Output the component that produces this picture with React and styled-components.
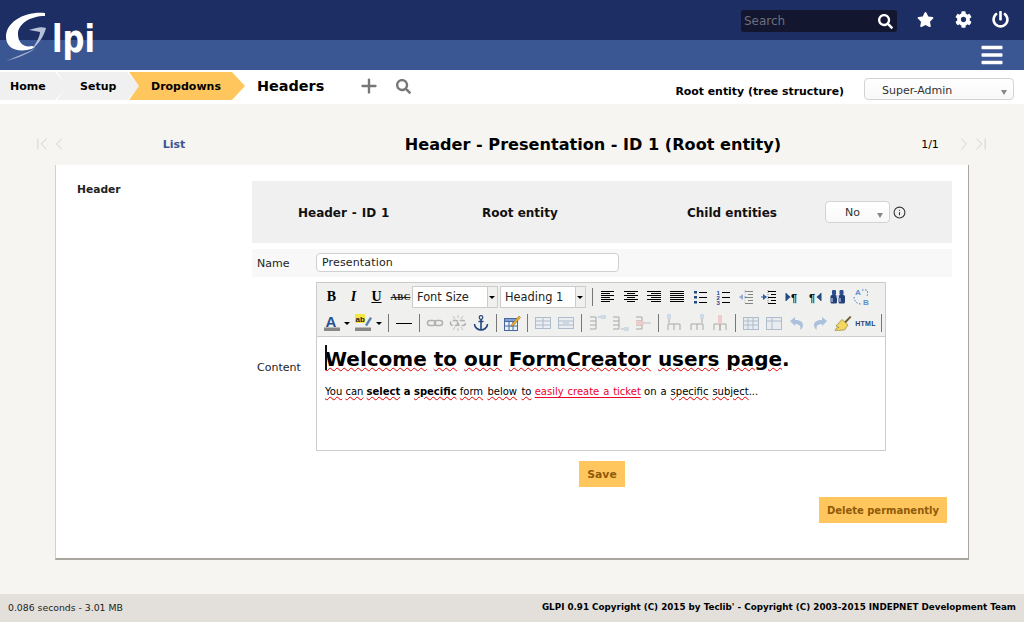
import React from 'react';
import styled, { createGlobalStyle } from 'styled-components';
import { FaStar, FaCog, FaPowerOff, FaSearch, FaBars } from 'react-icons/fa';
import { ChevronFirst, ChevronLast, ChevronLeft, ChevronRight, Info, Plus } from 'lucide-react';

const Global = createGlobalStyle`
  html, body { margin: 0; padding: 0; }
  body { font-family: "DejaVu Sans", Verdana, sans-serif; font-size: 11px; color: #000; background: #f6f5f1; }
`;

const Page = styled.div`
  position: relative;
  min-height: 622px;
  display: flex;
  flex-direction: column;
`;

const TopBar = styled.div`
  height: 40px;
  background: #1c2e63;
  display: flex;
  align-items: center;
  justify-content: flex-end;
  padding-right: 6px;
`;

const SearchBox = styled.div`
  width: 156px;
  height: 22px;
  box-sizing: border-box;
  padding: 0 4px 0 3px;
  margin: 2px 9px 0 0;
  background: #12162e;
  border-radius: 3px;
  display: flex;
  align-items: center;
  justify-content: space-between;
  color: #6d6f7e;
  font-size: 12px;
  svg { color: #fff; font-size: 15px; }
`;

const TopIcon = styled.span`
  width: 38px;
  margin-bottom: 2px;
  display: flex;
  justify-content: center;
  color: #fff;
  font-size: 17px;
  &:last-child { width: 36px; }
`;

const SubBar = styled.div`
  height: 30px;
  background: #3a5693;
  display: flex;
  align-items: center;
  justify-content: flex-end;
  padding-right: 20px;
  color: #fff;
  font-size: 24px;
`;

const Logo = styled.svg`
  position: absolute;
  left: 0;
  top: 0;
`;

const NavBar = styled.div`
  height: 34px;
  background: #fff;
  display: flex;
  align-items: center;
`;

const Crumb = styled.div`
  height: 28px;
  width: ${p => p.$w}px;
  margin-left: ${p => (p.$first ? 0 : -11)}px;
  margin-top: -2px;
  box-sizing: border-box;
  padding-left: ${p => p.$pad}px;
  display: flex;
  align-items: center;
  font-weight: bold;
  background: ${p => (p.$active ? '#ffc65d' : '#f0f0f0')};
  clip-path: ${p => (p.$first
    ? 'polygon(0 0, calc(100% - 13px) 0, 100% 50%, calc(100% - 13px) 100%, 0 100%)'
    : 'polygon(0 0, calc(100% - 13px) 0, 100% 50%, calc(100% - 13px) 100%, 0 100%, 10px 50%)')};
`;

const NavTitle = styled.div`
  margin-left: 12px;
  width: 94px;
  font-size: 14.4px;
  font-weight: bold;
  margin-top: -2px;
`;

const NavAction = styled.span`
  width: 35px;
  margin-top: -2px;
  display: flex;
  justify-content: center;
  color: #777;
  font-size: 15px;
`;

const EntityName = styled.div`
  margin-left: auto;
  margin-right: 20px;
  margin-top: 8px;
  font-weight: bold;
  font-size: 10.9px;
`;

const Select = styled.div`
  position: relative;
  width: ${p => p.$w}px;
  height: 22px;
  box-sizing: border-box;
  border: 1px solid #d3d3d3;
  border-radius: 4px;
  background: linear-gradient(#fff, #f8f8f8);
  display: flex;
  align-items: center;
  padding-left: ${p => p.$pad}px;
  color: #333;
  font-weight: normal;
  &::after {
    content: '';
    position: absolute;
    right: 6px;
    bottom: 4px;
    border: 3.5px solid transparent;
    border-top: 5px solid #888;
    border-bottom: 0;
  }
`;

const EntitySelect = styled(Select)`
  margin-right: 10px;
  margin-top: 4px;
  padding-top: 2px;
`;

const Main = styled.main`
  flex: 1;
  padding: 21px 55px 34px;
`;

const TitleRow = styled.div`
  height: 40px;
  display: flex;
  align-items: center;
  margin-left: -23px;
  margin-right: -22px;
  padding-bottom: 2px;
  box-sizing: border-box;
`;

const Pager = styled.div`
  display: flex;
  color: #d2d2d2;
  svg + svg { margin-left: -3px; }
`;

const ListLink = styled.div`
  width: 124px;
  text-align: center;
  font-weight: bold;
  color: #3a5693;
  margin-left: 43px;
`;

const Title = styled.h1`
  flex: 1;
  margin: 0;
  font-size: 16.1px;
  font-weight: bold;
  text-align: center;
  padding-left: 35px;
`;

const Count = styled.div`
  width: 30px;
  text-align: center;
  margin-right: 9px;
`;

const Card = styled.section`
  height: 395px;
  box-sizing: border-box;
  background: #fff;
  border-left: 1px solid #d2d0cb;
  border-right: 1px solid #a9a6a0;
  border-bottom: 2px solid #a9a6a0;
  display: flex;
  padding: 16px 16px 0 21px;
`;

const SideLabel = styled.div`
  width: 175px;
  font-weight: bold;
  font-size: 10.7px;
  color: #222;
  padding-top: 2px;
`;

const Form = styled.div`
  flex: 1;
  display: flex;
  flex-direction: column;
  min-width: 0;
`;

const HeadRow = styled.div`
  height: 62px;
  background: #f0f0f0;
  display: flex;
  align-items: center;
  font-weight: bold;
  font-size: 12px;
  color: #111;
  margin-bottom: 6px;
`;

const HeadCell = styled.div`
  width: ${p => p.$w}px;
  padding-left: ${p => p.$pad}px;
  padding-top: 2px;
  box-sizing: border-box;
  display: flex;
  align-items: center;
  word-spacing: ${p => p.$spread || 0}px;
`;

const NoSelect = styled(Select)`
  font-size: 11px;
`;

const InfoMark = styled.span`
  display: flex;
  margin-left: 3px;
  color: #333;
`;

const NameRow = styled.div`
  height: 28px;
  background: #f8f8f8;
  display: flex;
  align-items: center;
  margin-bottom: 5px;
`;

const FieldLabel = styled.div`
  width: 64px;
  padding-left: 5px;
  padding-top: ${p => (p.$low ? 2 : 0)}px;
  box-sizing: border-box;
  color: #222;
`;

const NameInput = styled.div`
  width: 303px;
  height: 19px;
  box-sizing: border-box;
  border: 1px solid #d0d0d0;
  border-radius: 4px;
  background: #fff;
  padding-left: 5px;
  line-height: 17px;
  letter-spacing: 0.15px;
  color: #222;
  margin-bottom: 2px;
`;

const ContentRow = styled.div`
  display: flex;
  align-items: center;
`;

const Editor = styled.div`
  width: 570px;
  height: 169px;
  box-sizing: border-box;
  border: 1px solid #ccc;
  display: flex;
  flex-direction: column;
`;

const Toolbar = styled.div`
  height: 54px;
  flex: none;
  background: #f0f0ee;
  border-bottom: 1px solid #ccc;
  padding: 2px 0 0 3px;
  box-sizing: border-box;
`;

const ToolRow = styled.div`
  height: 24px;
  margin-bottom: 2px;
  display: flex;
  align-items: center;
`;

const Tool = styled.span`
  width: ${p => p.$w || 23}px;
  height: 22px;
  flex: none;
  display: flex;
  align-items: center;
  justify-content: center;
  gap: 3px;
`;

const Glyph = styled.span`
  font-family: "Liberation Serif", serif;
  font-weight: bold;
  font-size: 14px;
  margin-right: ${p => p.$shift || 0}px;
  font-style: ${p => (p.$i ? 'italic' : 'normal')};
  text-decoration: ${p => p.$deco || 'none'};
`;

const TinyGlyph = styled.span`
  font-family: ${p => (p.$serif ? '"Liberation Serif", serif' : '"Liberation Sans", sans-serif')};
  font-weight: bold;
  font-size: ${p => p.$size || 7}px;
  letter-spacing: 0.3px;
  color: ${p => p.$color || '#222'};
  text-decoration: ${p => p.$deco || 'none'};
`;

const Caret = styled.i`
  width: 0;
  height: 0;
  border: 3px solid transparent;
  border-top: 3px solid #000;
  border-bottom: 0;
`;

const Sep = styled.span`
  width: 8px;
  height: 18px;
  flex: none;
  display: flex;
  justify-content: center;
  &::before { content: ''; width: 1px; background: #777; }
`;

const ListBox = styled.div`
  width: 86px;
  height: 22px;
  flex: none;
  margin-right: ${p => p.$mr || 0}px;
  box-sizing: border-box;
  border: 1px solid #ccc;
  background: #fff;
  display: flex;
  align-items: center;
  padding-left: 4px;
  color: #222;
  font-size: 11.4px;
  position: relative;
  &::after {
    content: '';
    position: absolute;
    top: 0;
    bottom: 0;
    right: 0;
    width: 9px;
    background: #f0f0ee;
    border-left: 1px solid #ccc;
  }
  &::before {
    content: '';
    position: absolute;
    z-index: 1;
    right: 2px;
    top: 9px;
    border: 3px solid transparent;
    border-top: 3px solid #000;
    border-bottom: 0;
  }
`;

const EditArea = styled.div`
  position: relative;
  flex: 1;
  background: #fff;
  padding: 0 8px;
  color: #000;
`;

const Cursor = styled.span`
  position: absolute;
  left: 8px;
  top: 8px;
  width: 2px;
  height: 25px;
  background: #111;
`;

const Heading = styled.h2`
  margin: 10px 0 0;
  font-size: 20px;
  line-height: 25px;
  font-weight: bold;
`;

const Para = styled.p`
  margin: 13px 0 0;
  font-size: 10px;
  line-height: 14px;
`;

const Typo = styled.span`
  text-decoration: underline wavy #e00000 1px;
  text-underline-offset: 1px;
`;

const WideWords = styled.span`
  word-spacing: ${p => p.$gap}px;
`;

const RedLink = styled.span`
  color: #f0002a;
  text-decoration: underline;
  text-underline-offset: 2px;
  word-spacing: 0.7px;
`;

const SaveRow = styled.div`
  display: flex;
  justify-content: center;
  margin: 10px 0 10px;
`;

const DeleteRow = styled.div`
  display: flex;
  justify-content: flex-end;
  padding-right: 5px;
`;

const Button = styled.div`
  height: 26px;
  padding: 0 8px;
  background: #ffc65d;
  color: #8f5a0a;
  font-weight: bold;
  font-size: ${p => p.$size}px;
  display: flex;
  align-items: center;
`;

const Footer = styled.footer`
  height: 28px;
  background: #e3e0db;
  display: flex;
  align-items: center;
  justify-content: space-between;
  padding: 0 8px 2px;
  box-sizing: border-box;
  font-size: 9.3px;
  color: #222;
`;

const Copyright = styled.b`
  color: #000;
  font-size: 8.77px;
`;

const Icon = styled.svg`
  display: block;
  opacity: ${p => (p.$off ? 0.45 : 1)};
`;

const IconLabel = styled.text`
  font-family: "Liberation Sans", sans-serif;
  font-weight: bold;
`;

const I = ({ off, children, w = 18, h = 18 }) => (
  <Icon $off={off} width={w} height={h} viewBox="0 0 18 18">{children}</Icon>
);

const Lines = ({ rows, stroke = '#000' }) => (
  <>
    {rows.map(([x1, x2], k) => (
      <line key={k} x1={x1} x2={x2} y1={3.5 + k * 2} y2={3.5 + k * 2} stroke={stroke} />
    ))}
  </>
);

const alignLeft = [[2, 15], [2, 11], [2, 15], [2, 11], [2, 15], [2, 11]];
const alignCenter = [[2, 16], [5, 13], [2, 16], [5, 13], [2, 16], [5, 13]];
const alignRight = [[2, 16], [6, 16], [2, 16], [6, 16], [2, 16], [6, 16]];
const alignFull = [[2, 16], [2, 16], [2, 16], [2, 16], [2, 16], [2, 16]];

const BulletIcon = () => (
  <I>
    <rect x="3" y="3" width="3" height="2.5" fill="#224a80" />
    <rect x="3" y="8" width="3" height="2.5" fill="#224a80" />
    <rect x="3" y="13" width="3" height="2.5" fill="#224a80" />
    <path d="M8 4.500h8M8 9.500h8M8 14.500h8" stroke="#000" />
  </I>
);

const NumberIcon = () => (
  <I>
    <IconLabel x="2.500" y="6.500" fontSize="6" fill="#224a90">1</IconLabel>
    <IconLabel x="2.500" y="11.500" fontSize="6" fill="#224a90">2</IconLabel>
    <IconLabel x="2.500" y="16.500" fontSize="6" fill="#224a90">3</IconLabel>
    <path d="M8 4.500h8M8 9.500h8M8 14.500h8" stroke="#000" />
  </I>
);

const IndentIcon = ({ off, out }) => (
  <I off={off}>
    <path d={out ? 'M2 9l4-3v6z' : 'M7 9L3 6v6z'} fill="#2a5aa8" />
    <path d={out ? 'M7 9h3' : 'M1 9h3'} stroke="#2a5aa8" />
    <path d="M8 3.500h8M11 6.500h5M8 9.500h8M11 12.500h5M8 15.500h8" stroke="#000" />
    <path d="M8 2v14" stroke="#888" strokeDasharray="1 1" />
  </I>
);

const DirIcon = ({ rtl }) => (
  <I>
    <g transform={rtl ? 'translate(18 0) scale(-1 1)' : undefined}>
      <path d="M3 5l4.500 4-4.500 4z" fill="#224a80" />
      <path d="M3 5v8" stroke="#224a80" />
    </g>
    <IconLabel x={rtl ? 3 : 8} y="13.500" fontSize="11" fill="#111">¶</IconLabel>
  </I>
);

const SearchIcon = () => (
  <I>
    <rect x="3" y="2" width="4" height="5" rx="1" fill="#2a4f8f" />
    <rect x="10.500" y="2" width="4" height="5" rx="1" fill="#2a4f8f" />
    <rect x="1.500" y="7" width="6.500" height="8.500" rx="1.500" fill="#22407a" />
    <rect x="9.500" y="7" width="6.500" height="8.500" rx="1.500" fill="#22407a" />
    <rect x="7.500" y="7" width="2.500" height="3" fill="#c8d4e8" />
    <path d="M3 10v4M11 10v4" stroke="#dfe7f5" />
  </I>
);

const ReplaceIcon = () => (
  <I>
    <IconLabel x="3" y="7" fontSize="8" fill="#5a8fd0">A</IconLabel>
    <IconLabel x="11" y="16.500" fontSize="8" fill="#5a8fd0">B</IconLabel>
    <path d="M2 9c0 4 3 7 7 7" stroke="#3a7fd0" strokeDasharray="1.500 1.500" fill="none" />
    <path d="M10 2h4c2 0 2 4 1 6" stroke="#3a7fd0" strokeDasharray="1.500 1.500" fill="none" />
  </I>
);

const ColorIcon = () => (
  <I>
    <IconLabel x="2.500" y="12.500" fontSize="15" fill="#2a4f8f">A</IconLabel>
    <rect x="1" y="13.500" width="16" height="3.500" fill="#888" />
  </I>
);

const HiliteIcon = () => (
  <I>
    <rect x="0" y="0" width="10" height="9" fill="#f5e642" />
    <IconLabel x="0.500" y="7.500" fontSize="8" fill="#222">ab</IconLabel>
    <path d="M10 11l5-8 2 1.200-5 8z" fill="#5a7fb5" />
    <rect x="0" y="13.500" width="16" height="3.500" fill="#888" />
  </I>
);

const LinkIcon = ({ broken }) => (
  <I off>
    {broken && <path d="M9 1v3M9 14v3M4 2l2 3M14 2l-2 3M4 16l2-3M14 16l-2-3" stroke="#888" />}
    <rect x="1.500" y="6.500" width="8" height="5" rx="2.500" fill="none" stroke="#666" strokeWidth="1.500" strokeDasharray={broken ? '5 2' : undefined} />
    <rect x="8.500" y="6.500" width="8" height="5" rx="2.500" fill="none" stroke="#666" strokeWidth="1.500" strokeDasharray={broken ? '5 2' : undefined} />
  </I>
);

const AnchorIcon = () => (
  <I>
    <circle cx="9" cy="3.500" r="1.800" fill="none" stroke="#24477e" strokeWidth="1.200" />
    <path d="M9 5v11M6.500 7.500h5M2.500 10c0 4 4 6 6.500 6s6.500-2 6.500-6" fill="none" stroke="#24477e" strokeWidth="1.600" />
  </I>
);

const TableEditIcon = () => (
  <I>
    <rect x="1.500" y="4.500" width="13" height="12" fill="#e9f0fa" stroke="#46689c" />
    <rect x="1.500" y="4.500" width="13" height="3" fill="#7fa0d0" stroke="#46689c" />
    <path d="M6 8v8M10 8v8M2 12h12" stroke="#46689c" />
    <path d="M9 10l7-8 1.500 1.500-7 8-2.500 1z" fill="#f0b030" stroke="#8a5a10" strokeWidth="0.5" />
  </I>
);

const CellIcon = ({ merge }) => (
  <I off>
    <rect x="1.500" y="3.500" width="15" height="11" fill="#e6edf6" stroke="#5f7ea8" />
    <path d="M2 7h14M2 11h14" stroke="#5f7ea8" />
    {merge ? <rect x="6" y="7" width="6" height="4" fill="#9fb8d8" /> : <path d="M9 4v10" stroke="#5f7ea8" />}
  </I>
);

const RowIcon = ({ variant }) => (
  <I off>
    <path d="M2 3h6v12H2M2 7h6M2 11h6" fill="none" stroke="#555" />
    {variant === 'up' && <><path d="M10 3h4" stroke="#4a7fc8" /><rect x="13" y="1" width="5" height="4" fill="#a8c0e0" /></>}
    {variant === 'down' && <><path d="M10 15h4" stroke="#4a7fc8" /><rect x="13" y="13" width="5" height="4" fill="#a8c0e0" /></>}
    {variant === 'del' && <><rect x="2" y="7" width="8" height="4" fill="#f0a0a0" /><path d="M10 9h7" stroke="#888" /></>}
  </I>
);

const ColIcon = ({ variant }) => (
  <I off>
    <path d="M3 16v-6h12v6M9 10v6" fill="none" stroke="#555" />
    {variant === 'left' && <><rect x="2" y="0" width="4" height="5" fill="#a8c0e0" /><path d="M4 5v4" stroke="#555" /></>}
    {variant === 'right' && <><rect x="12" y="0" width="4" height="5" fill="#a8c0e0" /><path d="M14 5v4" stroke="#555" /></>}
    {variant === 'del' && <><rect x="7" y="1" width="4" height="9" fill="#f0a0a0" /><path d="M9 10v7" stroke="#555" /></>}
  </I>
);

const GridIcon = ({ split }) => (
  <I off>
    <rect x="1.500" y="3.500" width="15" height="12" fill="#dfe8f4" stroke="#5f7ea8" />
    {split
      ? <path d="M2 7h14M7 4v11" stroke="#5f7ea8" />
      : <path d="M2 7h14M2 11h14M6 4v11M11 4v11" stroke="#5f7ea8" />}
  </I>
);

const ArrowIcon = ({ redo }) => (
  <I off>
    <g transform={redo ? 'translate(18 0) scale(-1 1)' : undefined}>
      <path d="M2 7l5-4v3c5 0 8 2 8 5 0 2-1 4-3 5 1-2 1-6-5-6v2z" fill="#5a8ac8" />
    </g>
  </I>
);

const BroomIcon = () => (
  <I>
    <path d="M10 8l6-6 1.500 1-6 6.500z" fill="#6f5a30" />
    <path d="M8 5.500l6 5.500-3.500 5-9.500.500 1.500-2.500 2.500-.500-3-1.500z" fill="#f2d860" stroke="#8a7420" strokeWidth="0.6" />
  </I>
);

const HrIcon = () => (
  <I><path d="M1 9.500h16" stroke="#000" /></I>
);

export default function App() {
  return (
    <Page>
      <Global />
      <TopBar>
        <SearchBox>Search<FaSearch /></SearchBox>
        <TopIcon><FaStar /></TopIcon>
        <TopIcon><FaCog /></TopIcon>
        <TopIcon><FaPowerOff /></TopIcon>
      </TopBar>
      <SubBar><FaBars /></SubBar>
      <Logo width="110" height="70" viewBox="0 0 110 70">
        <path d="M45 13C26 11 6 21 6 37c0 10 9 15 21 13 3-.5 6-1.500 8-3l-3-1C24 48 18 43 18 34c0-10 12-18 27-18z" fill="#fff" />
        <path d="M29 30c6-2 12-4 17-2-2 7-6 15-14 21 5-7 8-13 8-17-3-1-7-1-11-2z" fill="#b8c0d8" />
        <path d="M6 61l24-10 6-3c-6 5-18 10-30 13z" fill="#aab4cf" />
        <text x="52" y="52" fill="#fff" fontFamily="DejaVu Sans" fontWeight="bold" fontSize="37" textLength="43" lengthAdjust="spacingAndGlyphs">lpi</text>
      </Logo>

      <NavBar>
        <Crumb $first $w={68} $pad={10}>Home</Crumb>
        <Crumb $w={83} $pad={23}>Setup</Crumb>
        <Crumb $w={116} $pad={22} $active>Dropdowns</Crumb>
        <NavTitle>Headers</NavTitle>
        <NavAction><Plus size={22} strokeWidth={2.6} /></NavAction>
        <NavAction><FaSearch /></NavAction>
        <EntityName>Root entity (tree structure)</EntityName>
        <EntitySelect $w={150} $pad={17}>Super-Admin</EntitySelect>
      </NavBar>

      <Main>
        <TitleRow>
          <Pager>
            <ChevronFirst size={20} strokeWidth={1.2} />
            <ChevronLeft size={20} strokeWidth={1.2} />
          </Pager>
          <ListLink>List</ListLink>
          <Title>Header - Presentation - ID 1 (Root entity)</Title>
          <Count>1/1</Count>
          <Pager>
            <ChevronRight size={20} strokeWidth={1.2} />
            <ChevronLast size={20} strokeWidth={1.2} />
          </Pager>
        </TitleRow>

        <Card>
          <SideLabel>Header</SideLabel>
          <Form>
            <HeadRow>
              <HeadCell $w={184} $pad={46} $spread={0.7}>Header - ID 1</HeadCell>
              <HeadCell $w={251} $pad={46}>Root entity</HeadCell>
              <HeadCell $w={138}>Child entities</HeadCell>
              <NoSelect $w={65} $pad={19}>No</NoSelect>
              <InfoMark><Info size={13} /></InfoMark>
            </HeadRow>
            <NameRow>
              <FieldLabel>Name</FieldLabel>
              <NameInput>Presentation</NameInput>
            </NameRow>
            <ContentRow>
              <FieldLabel $low>Content</FieldLabel>
              <Editor>
                <Toolbar>
                  <ToolRow>
                    <Tool><Glyph>B</Glyph></Tool>
                    <Tool><Glyph $i $shift={2}>I</Glyph></Tool>
                    <Tool><Glyph $deco="underline" $shift={2}>U</Glyph></Tool>
                    <Tool><TinyGlyph $serif $size={9} $deco="line-through">ABC</TinyGlyph></Tool>
                    <ListBox $mr={2}>Font Size</ListBox>
                    <ListBox $mr={2}>Heading 1</ListBox>
                    <Sep />
                    <Tool><I><Lines rows={alignLeft} /></I></Tool>
                    <Tool><I><Lines rows={alignCenter} /></I></Tool>
                    <Tool><I><Lines rows={alignRight} /></I></Tool>
                    <Tool><I><Lines rows={alignFull} /></I></Tool>
                    <Tool><BulletIcon /></Tool>
                    <Tool><NumberIcon /></Tool>
                    <Tool><IndentIcon off out /></Tool>
                    <Tool><IndentIcon /></Tool>
                    <Tool><DirIcon /></Tool>
                    <Tool><DirIcon rtl /></Tool>
                    <Tool><SearchIcon /></Tool>
                    <Tool><ReplaceIcon /></Tool>
                  </ToolRow>
                  <ToolRow>
                    <Tool $w={33}><ColorIcon /><Caret /></Tool>
                    <Tool $w={31}><HiliteIcon /><Caret /></Tool>
                    <Sep />
                    <Tool><HrIcon /></Tool>
                    <Sep />
                    <Tool><LinkIcon /></Tool>
                    <Tool><LinkIcon broken /></Tool>
                    <Tool><AnchorIcon /></Tool>
                    <Sep />
                    <Tool><TableEditIcon /></Tool>
                    <Sep />
                    <Tool><CellIcon /></Tool>
                    <Tool><CellIcon merge /></Tool>
                    <Sep />
                    <Tool><RowIcon variant="up" /></Tool>
                    <Tool><RowIcon variant="down" /></Tool>
                    <Tool><RowIcon variant="del" /></Tool>
                    <Sep />
                    <Tool><ColIcon variant="left" /></Tool>
                    <Tool><ColIcon variant="right" /></Tool>
                    <Tool><ColIcon variant="del" /></Tool>
                    <Sep />
                    <Tool><GridIcon /></Tool>
                    <Tool><GridIcon split /></Tool>
                    <Tool><ArrowIcon /></Tool>
                    <Tool><ArrowIcon redo /></Tool>
                    <Tool><BroomIcon /></Tool>
                    <Tool><TinyGlyph $color="#24477e">HTML</TinyGlyph></Tool>
                    <Sep />
                  </ToolRow>
                </Toolbar>
                <EditArea>
                  <Cursor />
                  <Heading>
                    <Typo>Welcome</Typo> <Typo>to</Typo> <Typo>our</Typo> <Typo>FormCreator</Typo> <Typo>users</Typo> <Typo>page</Typo>.
                  </Heading>
                  <Para>
                    <Typo>You</Typo> <Typo>can</Typo> <b><Typo>select</Typo> a <Typo>specific</Typo></b> <WideWords $gap={1.2}><Typo>form</Typo> <Typo>below</Typo> <Typo>to</Typo></WideWords> <RedLink>easily create a ticket</RedLink> <WideWords $gap={0.8}>on a <Typo>specific</Typo> <Typo>subject</Typo>...</WideWords>
                  </Para>
                </EditArea>
              </Editor>
            </ContentRow>
            <SaveRow><Button $size={10.8}>Save</Button></SaveRow>
            <DeleteRow><Button $size={10}>Delete permanently</Button></DeleteRow>
          </Form>
        </Card>
      </Main>

      <Footer>
        <span>0.086 seconds - 3.01 MB</span>
        <Copyright>GLPI 0.91 Copyright (C) 2015 by Teclib' - Copyright (C) 2003-2015 INDEPNET Development Team</Copyright>
      </Footer>
    </Page>
  );
}
